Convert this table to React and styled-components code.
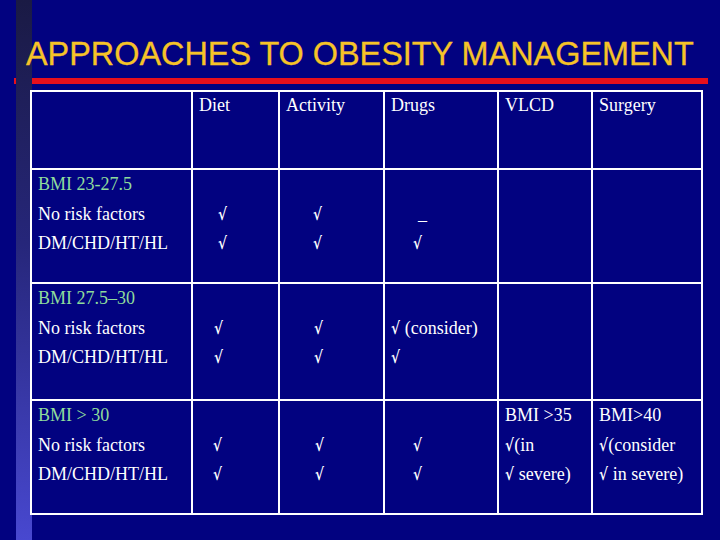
import React from 'react';
import styled, { createGlobalStyle } from 'styled-components';

const colors = {
  navy: '#020280',
  gold: '#f6c328',
  red: '#e8101c',
  green: '#8fdc9c',
  white: '#ffffff',
};

const GlobalStyle = createGlobalStyle`
  html, body {
    margin: 0;
    padding: 0;
    background: ${colors.navy};
  }
`;

const Slide = styled.div`
  width: 720px;
  height: 540px;
  overflow: hidden;
  box-sizing: border-box;
  padding-top: 38px;
  background:
    linear-gradient(to bottom, #1a1a44 0%, #26267a 45%, #4848d0 100%) 16px 0 / 16px 100% no-repeat,
    ${colors.navy};
`;

const Title = styled.h1`
  margin: 0 0 0 26px;
  font-family: 'Liberation Sans', Arial, sans-serif;
  font-weight: normal;
  font-size: 32.4px;
  line-height: 32px;
  color: ${colors.gold};
  white-space: nowrap;
  -webkit-text-stroke: 0.3px ${colors.gold};
`;

const Rule = styled.div`
  margin: 8px 0 0 14px;
  width: 694px;
  height: 6px;
  background: linear-gradient(
    to right,
    ${colors.red} 0 2px,
    transparent 2px 18px,
    ${colors.red} 18px
  );
`;

const Grid = styled.div`
  margin: 6px 0 0 30px;
  width: 673px;
  box-sizing: border-box;
  padding: 2px;
  display: grid;
  grid-template-columns: 159px 85px 103px 112px 92px 108px;
  grid-template-rows: 76px 112px 115px 112px;
  gap: 2px;
  background: ${colors.white};
  font-family: 'Liberation Serif', 'Times New Roman', serif;
  font-size: 18px;
  color: ${colors.white};
`;

const Cell = styled.div`
  background: ${colors.navy};
  padding-left: 6px;
  line-height: ${(p) => (p.$head ? '26px' : '29.5px')};
  white-space: nowrap;
`;

const Line = styled.div`
  height: 29.5px;
  padding-left: ${(p) => p.$indent || 0}px;
  color: ${(p) => (p.$green ? colors.green : colors.white)};
`;

const Check = styled.span`
  font-family: 'DejaVu Serif', serif;
  font-weight: bold;
  font-size: 17px;
  display: inline-block;
  transform: scaleX(0.8);
  transform-origin: left center;
  margin-right: -2px;
`;

const headers = ['', 'Diet', 'Activity', 'Drugs', 'VLCD', 'Surgery'];

const rows = [
  {
    label: 'BMI 23-27.5',
    cells: [
      [null, { c: true, i: 19 }, { c: true, i: 19 }],
      [null, { c: true, i: 27 }, { c: true, i: 27 }],
      [null, { t: '_', i: 27 }, { c: true, i: 22 }],
      [],
      [],
    ],
  },
  {
    label: 'BMI  27.5–30',
    cells: [
      [null, { c: true, i: 15 }, { c: true, i: 15 }],
      [null, { c: true, i: 28 }, { c: true, i: 28 }],
      [null, { c: true, t: ' (consider)' }, { c: true }],
      [],
      [],
    ],
  },
  {
    label: 'BMI > 30',
    cells: [
      [null, { c: true, i: 14 }, { c: true, i: 14 }],
      [null, { c: true, i: 29 }, { c: true, i: 29 }],
      [null, { c: true, i: 22 }, { c: true, i: 22 }],
      [{ t: 'BMI >35' }, { c: true, t: '(in' }, { c: true, t: ' severe)' }],
      [{ t: 'BMI>40' }, { c: true, t: '(consider' }, { c: true, t: ' in severe)' }],
    ],
  },
];

const riskLines = ['No risk factors', 'DM/CHD/HT/HL'];

const App = () => {
  return (
    <>
      <GlobalStyle />
      <Slide>
        <Title>APPROACHES TO OBESITY MANAGEMENT</Title>
        <Rule />
        <Grid>
          {headers.map((h, i) => (
            <Cell key={`h${i}`} $head>
              {h}
            </Cell>
          ))}
          {rows.map((row, r) => (
            <React.Fragment key={r}>
              <Cell>
                <Line $green>{row.label}</Line>
                {riskLines.map((t) => (
                  <Line key={t}>{t}</Line>
                ))}
              </Cell>
              {row.cells.map((lines, c) => (
                <Cell key={c}>
                  {lines.map((ln, k) => (
                    <Line key={k} $indent={ln?.i}>
                      {ln?.c && <Check>√</Check>}
                      {ln?.t}
                    </Line>
                  ))}
                </Cell>
              ))}
            </React.Fragment>
          ))}
        </Grid>
      </Slide>
    </>
  );
};

export default App;
